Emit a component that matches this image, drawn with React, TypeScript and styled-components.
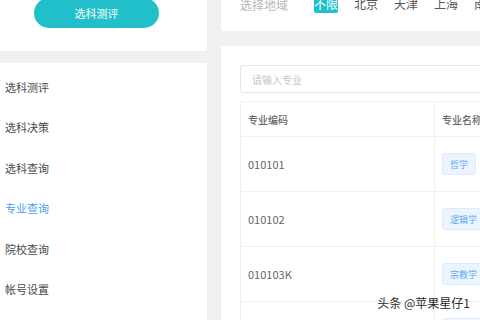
import React, { ReactElement } from 'react'
import styled, { createGlobalStyle } from 'styled-components'

const GlobalStyle = createGlobalStyle`
  html, body {
    margin: 0;
    padding: 0;
    background: #f0f0f0;
    overflow: hidden;
  }
  body {
    font-family: "Noto Sans CJK SC", "Noto Sans", sans-serif;
  }
  * {
    box-sizing: border-box;
  }
`

const Page = styled.div`
  position: relative;
  display: grid;
  grid-template-columns: 207px 1fr;
  column-gap: 14px;
  width: 480px;
  height: 320px;
  overflow: hidden;
`

const Column = styled.div<{ $gap: number }>`
  display: flex;
  flex-direction: column;
  gap: ${(p) => p.$gap}px;
  min-width: 0;
`

const Card = styled.div<{ $height?: number }>`
  background: #fff;
  height: ${(p) => (p.$height ? `${p.$height}px` : 'auto')};
  flex: ${(p) => (p.$height ? '0 0 auto' : '1 1 auto')};
  overflow: hidden;
`

const TestCard = styled(Card)`
  display: flex;
  justify-content: center;
  align-items: flex-start;
`

const TestButton = styled.button`
  width: 125px;
  height: 30px;
  margin: -2px 0 0 -14px;
  border: none;
  border-radius: 15px;
  background: #21bfc9;
  color: #fff;
  font-family: inherit;
  font-size: 11px;
  padding: 0;
  cursor: pointer;
`

const Menu = styled.ul`
  list-style: none;
  margin: 0;
  padding: 16px 0 0 5px;
  display: flex;
  flex-direction: column;
`

const MenuItem = styled.li<{ $active?: boolean }>`
  height: 40.4px;
  line-height: 16px;
  font-size: 11px;
  color: ${(p) => (p.$active ? '#4ba0f2' : '#4a4a4a')};
`

const RegionRow = styled.div`
  display: flex;
  align-items: center;
  margin: -5px 0 0 19px;
  height: 18px;
  font-size: 12px;
  white-space: nowrap;
`

const RegionLabel = styled.span`
  flex: 0 0 74px;
  color: #b8b8b8;
`

const Region = styled.span<{ $active?: boolean }>`
  flex: 0 0 auto;
  margin-right: 16px;
  line-height: 18px;
  color: ${(p) => (p.$active ? '#fff' : '#555')};
  background: ${(p) => (p.$active ? '#21bfc9' : 'transparent')};
  border-radius: 2px;
`

const MainCard = styled(Card)`
  padding: 19px 0 0 19px;
  display: flex;
  flex-direction: column;
  gap: 8px;
`

const SearchInput = styled.input`
  flex: 0 0 auto;
  width: calc(100% + 20px);
  height: 28px;
  border: 1px solid #e6e6e6;
  border-radius: 3px;
  padding: 0 11px;
  font-family: inherit;
  font-size: 10px;
  color: #333;
  outline: none;
  &::placeholder {
    color: #c2c6cc;
  }
`

const Table = styled.div`
  width: calc(100% + 40px);
  border-top: 1px solid #f0f0f0;
  border-left: 1px solid #f0f0f0;
`

const Row = styled.div<{ $height: number }>`
  display: grid;
  grid-template-columns: 193px 1fr;
  height: ${(p) => p.$height}px;
  border-bottom: 1px solid #f0f0f0;
`

const Cell = styled.div<{ $head?: boolean }>`
  display: flex;
  align-items: center;
  padding-left: 7px;
  font-size: ${(p) => (p.$head ? '10px' : '11px')};
  font-weight: ${(p) => (p.$head ? 500 : 400)};
  color: #666;
  & + & {
    border-left: 1px solid #f0f0f0;
  }
`

const Tag = styled.span`
  display: inline-flex;
  align-items: center;
  height: 22px;
  padding: 0 7px;
  font-size: 9px;
  color: #5aa7f2;
  background: #ecf5ff;
  border: 1px solid #d9ecff;
  border-radius: 3px;
`

const Watermark = styled.div`
  position: absolute;
  right: 10px;
  bottom: 9px;
  font-size: 12px;
  color: #2a2a2a;
  text-shadow: 0 0 2px #fff, 0 0 2px #fff;
`

const menu = ['选科测评', '选科决策', '选科查询', '专业查询', '院校查询', '帐号设置']
const regions = ['不限', '北京', '天津', '上海', '南京']
const majors = [
  { code: '010101', name: '哲学' },
  { code: '010102', name: '逻辑学' },
  { code: '010103K', name: '宗教学' },
  { code: '010104T', name: '伦理学' }
]

function App(): ReactElement {
  return (
    <Page>
      <GlobalStyle />
      <Column $gap={12}>
        <TestCard $height={51}>
          <TestButton>选科测评</TestButton>
        </TestCard>
        <Card>
          <Menu>
            {menu.map((m) => (
              <MenuItem key={m} $active={m === '专业查询'}>
                {m}
              </MenuItem>
            ))}
          </Menu>
        </Card>
      </Column>

      <Column $gap={15}>
        <Card $height={31}>
          <RegionRow>
            <RegionLabel>选择地域</RegionLabel>
            {regions.map((r) => (
              <Region key={r} $active={r === '不限'}>
                {r}
              </Region>
            ))}
          </RegionRow>
        </Card>
        <MainCard>
          <SearchInput placeholder="请输入专业" />
          <Table>
            <Row $height={35}>
              <Cell $head>专业编码</Cell>
              <Cell $head>专业名称</Cell>
            </Row>
            {majors.map((m) => (
              <Row key={m.code} $height={55}>
                <Cell>{m.code}</Cell>
                <Cell>
                  <Tag>{m.name}</Tag>
                </Cell>
              </Row>
            ))}
          </Table>
        </MainCard>
      </Column>

      <Watermark>头条 @苹果星仔1</Watermark>
    </Page>
  )
}

export default App
